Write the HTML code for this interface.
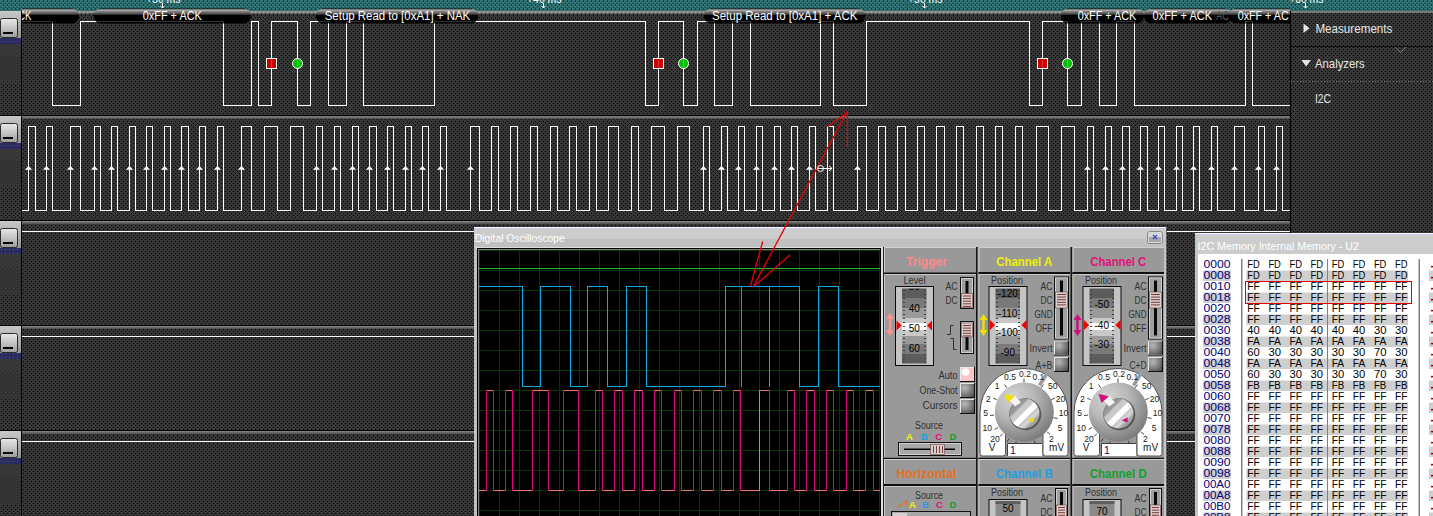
<!DOCTYPE html>
<html><head><meta charset="utf-8"><style>
html,body{margin:0;padding:0;width:1433px;height:516px;overflow:hidden;background:#333;font-family:"Liberation Sans", sans-serif}
</style></head><body>
<svg width="1433" height="516" style="position:absolute;left:0;top:0" font-family='"Liberation Sans", sans-serif'>
<defs>
<pattern id="dots" width="4" height="4" patternUnits="userSpaceOnUse"><rect width="4" height="4" fill="#363636"/><rect x="3" y="1" width="1" height="1" fill="#000"/><rect x="1" y="3" width="1" height="1" fill="#000"/></pattern>
<pattern id="sepp" width="4" height="3" patternUnits="userSpaceOnUse"><rect width="4" height="1" fill="#8e8e8e"/><rect y="1" width="4" height="1" fill="#8a8a8a"/><rect y="2" width="4" height="1" fill="#6a6a6a"/><rect x="1" y="1" width="1" height="1" fill="#a4a4a4"/><rect x="3" y="2" width="1" height="1" fill="#303030"/></pattern><pattern id="teal" width="4" height="4" patternUnits="userSpaceOnUse"><rect width="4" height="4" fill="#2c6c6c"/><rect x="3" y="0" width="1" height="1" fill="#2a2a86"/><rect x="3" y="1" width="1" height="1" fill="#263636"/><rect x="3" y="2" width="1" height="1" fill="#6f6f6f"/><rect x="1" y="3" width="1" height="1" fill="#263636"/><rect x="1" y="0" width="1" height="1" fill="#6f6f6f"/></pattern>
<pattern id="tdots" width="4" height="4" patternUnits="userSpaceOnUse"><rect width="4" height="4" fill="#363636"/><rect x="3" y="1" width="1" height="1" fill="#1f4f4f"/><rect x="1" y="3" width="1" height="1" fill="#1f4f4f"/></pattern><pattern id="ndots" width="4" height="4" patternUnits="userSpaceOnUse"><rect width="4" height="4" fill="#363636"/><rect x="3" y="1" width="1" height="1" fill="#1a1a5a"/><rect x="1" y="3" width="1" height="1" fill="#1a1a5a"/></pattern><pattern id="navy" width="4" height="4" patternUnits="userSpaceOnUse"><rect width="4" height="4" fill="#2b2b62"/><rect x="1" y="1" width="1" height="1" fill="#2f6b6b"/></pattern>
<linearGradient id="pillg" x1="0" y1="0" x2="0" y2="1"><stop offset="0" stop-color="#101010"/><stop offset="0.06" stop-color="#101010"/><stop offset="0.07" stop-color="#b4b4b4"/><stop offset="0.13" stop-color="#b0b0b0"/><stop offset="0.14" stop-color="#909090"/><stop offset="0.33" stop-color="#5c5c5c"/><stop offset="0.34" stop-color="#383838"/><stop offset="0.4" stop-color="#303030"/><stop offset="0.41" stop-color="#000"/><stop offset="1" stop-color="#000"/></linearGradient>
<linearGradient id="lgrad" x1="0" y1="0" x2="0" y2="1"><stop offset="0" stop-color="#c8c8c8"/><stop offset="1" stop-color="#8c8c8c"/></linearGradient>
<linearGradient id="btng" x1="0" y1="0" x2="0" y2="1"><stop offset="0" stop-color="#e8e8e8"/><stop offset="0.5" stop-color="#c4c4c4"/><stop offset="1" stop-color="#9a9a9a"/></linearGradient>
<linearGradient id="sepg" x1="0" y1="0" x2="0" y2="1"><stop offset="0" stop-color="#8a8a8a"/><stop offset="1" stop-color="#4a4a4a"/></linearGradient>
</defs>
<rect width="1433" height="516" fill="url(#dots)"/>
<rect x="0" y="0" width="1433" height="11" fill="url(#teal)"/>
<svg x="22" y="11" width="1268" height="3"><rect x="-22" y="0" width="1300" height="3" fill="url(#sepp)"/></svg>
<rect x="1291" y="11" width="142" height="2" fill="#7a7a7a"/>
<rect x="21" y="11" width="1" height="505" fill="#000"/>
<rect x="1290" y="11" width="1" height="505" fill="#000"/>
<rect x="0" y="11" width="21" height="31" fill="url(#lgrad)"/><rect x="0.5" y="18.5" width="17" height="19" rx="2" fill="url(#btng)" stroke="#2a2a2a"/><rect x="3" y="32" width="10" height="2" fill="#000"/><rect x="0" y="38" width="21" height="6" fill="url(#navy)"/><rect x="0" y="44" width="21" height="12" fill="url(#tdots)"/><rect x="0" y="56" width="21" height="28" fill="url(#ndots)"/><rect x="0" y="116" width="21" height="31" fill="url(#lgrad)"/><rect x="0.5" y="123.5" width="17" height="19" rx="2" fill="url(#btng)" stroke="#2a2a2a"/><rect x="3" y="137" width="10" height="2" fill="#000"/><rect x="0" y="143" width="21" height="6" fill="url(#navy)"/><rect x="0" y="149" width="21" height="12" fill="url(#tdots)"/><rect x="0" y="161" width="21" height="28" fill="url(#ndots)"/><rect x="0" y="221" width="21" height="31" fill="url(#lgrad)"/><rect x="0.5" y="228.5" width="17" height="19" rx="2" fill="url(#btng)" stroke="#2a2a2a"/><rect x="3" y="242" width="10" height="2" fill="#000"/><rect x="0" y="248" width="21" height="6" fill="url(#navy)"/><rect x="0" y="254" width="21" height="12" fill="url(#tdots)"/><rect x="0" y="266" width="21" height="28" fill="url(#ndots)"/><rect x="0" y="326" width="21" height="31" fill="url(#lgrad)"/><rect x="0.5" y="333.5" width="17" height="19" rx="2" fill="url(#btng)" stroke="#2a2a2a"/><rect x="3" y="347" width="10" height="2" fill="#000"/><rect x="0" y="353" width="21" height="6" fill="url(#navy)"/><rect x="0" y="359" width="21" height="12" fill="url(#tdots)"/><rect x="0" y="371" width="21" height="28" fill="url(#ndots)"/><rect x="0" y="431" width="21" height="31" fill="url(#lgrad)"/><rect x="0.5" y="438.5" width="17" height="19" rx="2" fill="url(#btng)" stroke="#2a2a2a"/><rect x="3" y="452" width="10" height="2" fill="#000"/><rect x="0" y="458" width="21" height="6" fill="url(#navy)"/><rect x="0" y="464" width="21" height="12" fill="url(#tdots)"/><rect x="0" y="476" width="21" height="28" fill="url(#ndots)"/><rect x="0" y="115" width="1290" height="1" fill="#000"/><rect x="22" y="116" width="1268" height="3" fill="url(#sepg)"/><rect x="0" y="220" width="1290" height="1" fill="#000"/><rect x="22" y="221" width="1268" height="3" fill="url(#sepg)"/><rect x="0" y="325" width="1290" height="1" fill="#000"/><rect x="22" y="326" width="1268" height="3" fill="url(#sepg)"/><rect x="0" y="430" width="1290" height="1" fill="#000"/><rect x="22" y="431" width="1268" height="3" fill="url(#sepg)"/>
<g fill="#fff" font-size="12">
<text x="146" y="2.8" textLength="34.5" lengthAdjust="spacingAndGlyphs">+30 ms</text><text x="527" y="2.8" textLength="34.5" lengthAdjust="spacingAndGlyphs">+40 ms</text><text x="908" y="2.8" textLength="34.5" lengthAdjust="spacingAndGlyphs">+50 ms</text><text x="1289" y="2.8" textLength="34.5" lengthAdjust="spacingAndGlyphs">+60 ms</text>
</g>
<g stroke="#fff" stroke-width="1" fill="none">
<path d="M162.5,3 V8 M160.5,6 L162.5,8 L164.5,6 M543.5,3 V8 M541.5,6 L543.5,8 L545.5,6 M924.5,3 V8 M922.5,6 L924.5,8 L926.5,6 M1305.5,3 V8 M1303.5,6 L1305.5,8 L1307.5,6"/>
</g>
<g shape-rendering="crispEdges">
<polyline points="22,21.5 52.5,21.5 52.5,105.5 80.5,105.5 80.5,21.5 223.5,21.5 223.5,105.5 251.5,105.5 251.5,21.5 258.5,21.5 258.5,105.5 271.5,105.5 271.5,21.5 297.5,21.5 297.5,105.5 310.5,105.5 310.5,21.5 328.5,21.5 328.5,105.5 346.5,105.5 346.5,21.5 363.5,21.5 363.5,105.5 434.5,105.5 434.5,21.5 645.5,21.5 645.5,105.5 658.5,105.5 658.5,21.5 683.5,21.5 683.5,105.5 697.5,105.5 697.5,21.5 714.5,21.5 714.5,105.5 732.5,105.5 732.5,21.5 750.5,21.5 750.5,105.5 820.5,105.5 820.5,21.5 833.5,21.5 833.5,105.5 866.5,105.5 866.5,21.5 1029.5,21.5 1029.5,105.5 1042.5,105.5 1042.5,21.5 1067.5,21.5 1067.5,105.5 1081.5,105.5 1081.5,21.5 1099.5,21.5 1099.5,105.5 1116.5,105.5 1116.5,21.5 1134.5,21.5 1134.5,105.5 1245.5,105.5 1245.5,21.5 1252.5,21.5 1252.5,105.5 1290,105.5" fill="none" stroke="#fff" stroke-width="1"/>
<polyline points="22,210.5 28.5,210.5 28.5,126.5 35.5,126.5 35.5,210.5 46.5,210.5 46.5,126.5 52.5,126.5 52.5,210.5 70.5,210.5 70.5,126.5 80.5,126.5 80.5,210.5 94.5,210.5 94.5,126.5 100.5,126.5 100.5,210.5 111.5,210.5 111.5,126.5 117.5,126.5 117.5,210.5 129.5,210.5 129.5,126.5 135.5,126.5 135.5,210.5 146.5,210.5 146.5,126.5 152.5,126.5 152.5,210.5 164.5,210.5 164.5,126.5 170.5,126.5 170.5,210.5 181.5,210.5 181.5,126.5 188.5,126.5 188.5,210.5 199.5,210.5 199.5,126.5 205.5,126.5 205.5,210.5 217.5,210.5 217.5,126.5 223.5,126.5 223.5,210.5 241.5,210.5 241.5,126.5 251.5,126.5 251.5,210.5 264.5,210.5 264.5,126.5 277.5,126.5 277.5,210.5 290.5,210.5 290.5,126.5 303.5,126.5 303.5,210.5 316.5,210.5 316.5,126.5 322.5,126.5 322.5,210.5 334.5,210.5 334.5,126.5 340.5,126.5 340.5,210.5 352.5,210.5 352.5,126.5 358.5,126.5 358.5,210.5 369.5,210.5 369.5,126.5 376.5,126.5 376.5,210.5 387.5,210.5 387.5,126.5 393.5,126.5 393.5,210.5 405.5,210.5 405.5,126.5 411.5,126.5 411.5,210.5 422.5,210.5 422.5,126.5 428.5,126.5 428.5,210.5 440.5,210.5 440.5,126.5 446.5,126.5 446.5,210.5 470.5,210.5 470.5,126.5 479.5,126.5 479.5,210.5 491.5,210.5 491.5,126.5 498.5,126.5 498.5,210.5 510.5,210.5 510.5,126.5 517.5,126.5 517.5,210.5 530.5,210.5 530.5,126.5 537.5,126.5 537.5,210.5 550.5,210.5 550.5,126.5 557.5,126.5 557.5,210.5 569.5,210.5 569.5,126.5 576.5,126.5 576.5,210.5 589.5,210.5 589.5,126.5 596.5,126.5 596.5,210.5 608.5,210.5 608.5,126.5 618.5,126.5 618.5,210.5 631.5,210.5 631.5,126.5 638.5,126.5 638.5,210.5 651.5,210.5 651.5,126.5 664.5,126.5 664.5,210.5 677.5,210.5 677.5,126.5 689.5,126.5 689.5,210.5 703.5,210.5 703.5,126.5 709.5,126.5 709.5,210.5 721.5,210.5 721.5,126.5 727.5,126.5 727.5,210.5 738.5,210.5 738.5,126.5 744.5,126.5 744.5,210.5 756.5,210.5 756.5,126.5 762.5,126.5 762.5,210.5 774.5,210.5 774.5,126.5 780.5,126.5 780.5,210.5 791.5,210.5 791.5,126.5 797.5,126.5 797.5,210.5 809.5,210.5 809.5,126.5 815.5,126.5 815.5,210.5 827.5,210.5 827.5,126.5 833.5,126.5 833.5,210.5 857.5,210.5 857.5,126.5 866.5,126.5 866.5,210.5 878.5,210.5 878.5,126.5 885.5,126.5 885.5,210.5 897.5,210.5 897.5,126.5 905.5,126.5 905.5,210.5 917.5,210.5 917.5,126.5 924.5,126.5 924.5,210.5 936.5,210.5 936.5,126.5 944.5,126.5 944.5,210.5 956.5,210.5 956.5,126.5 963.5,126.5 963.5,210.5 976.5,210.5 976.5,126.5 983.5,126.5 983.5,210.5 995.5,210.5 995.5,126.5 1002.5,126.5 1002.5,210.5 1015.5,210.5 1015.5,126.5 1022.5,126.5 1022.5,210.5 1036.5,210.5 1036.5,126.5 1048.5,126.5 1048.5,210.5 1061.5,210.5 1061.5,126.5 1074.5,126.5 1074.5,210.5 1087.5,210.5 1087.5,126.5 1093.5,126.5 1093.5,210.5 1105.5,210.5 1105.5,126.5 1111.5,126.5 1111.5,210.5 1122.5,210.5 1122.5,126.5 1129.5,126.5 1129.5,210.5 1140.5,210.5 1140.5,126.5 1147.5,126.5 1147.5,210.5 1158.5,210.5 1158.5,126.5 1164.5,126.5 1164.5,210.5 1176.5,210.5 1176.5,126.5 1182.5,126.5 1182.5,210.5 1193.5,210.5 1193.5,126.5 1199.5,126.5 1199.5,210.5 1211.5,210.5 1211.5,126.5 1217.5,126.5 1217.5,210.5 1234.5,210.5 1234.5,126.5 1244.5,126.5 1244.5,210.5 1258.5,210.5 1258.5,126.5 1264.5,126.5 1264.5,210.5 1276.5,210.5 1276.5,126.5 1282.5,126.5 1282.5,210.5 1290,210.5" fill="none" stroke="#fff" stroke-width="1"/>
<path d="M22,231.5 H1290 M22,336.5 H1290 M22,441.5 H1290" stroke="#fff" stroke-width="1"/>
</g>
<path d="M24.9,169.8 L32.1,169.8 L28.5,166Z" fill="#fff"/><path d="M42.9,169.8 L50.1,169.8 L46.5,166Z" fill="#fff"/><path d="M66.9,169.8 L74.1,169.8 L70.5,166Z" fill="#fff"/><path d="M90.9,169.8 L98.1,169.8 L94.5,166Z" fill="#fff"/><path d="M107.9,169.8 L115.1,169.8 L111.5,166Z" fill="#fff"/><path d="M125.9,169.8 L133.1,169.8 L129.5,166Z" fill="#fff"/><path d="M142.9,169.8 L150.1,169.8 L146.5,166Z" fill="#fff"/><path d="M160.9,169.8 L168.1,169.8 L164.5,166Z" fill="#fff"/><path d="M177.9,169.8 L185.1,169.8 L181.5,166Z" fill="#fff"/><path d="M195.9,169.8 L203.1,169.8 L199.5,166Z" fill="#fff"/><path d="M213.9,169.8 L221.1,169.8 L217.5,166Z" fill="#fff"/><path d="M237.9,169.8 L245.1,169.8 L241.5,166Z" fill="#fff"/><path d="M312.9,169.8 L320.1,169.8 L316.5,166Z" fill="#fff"/><path d="M330.9,169.8 L338.1,169.8 L334.5,166Z" fill="#fff"/><path d="M348.9,169.8 L356.1,169.8 L352.5,166Z" fill="#fff"/><path d="M365.9,169.8 L373.1,169.8 L369.5,166Z" fill="#fff"/><path d="M383.9,169.8 L391.1,169.8 L387.5,166Z" fill="#fff"/><path d="M401.9,169.8 L409.1,169.8 L405.5,166Z" fill="#fff"/><path d="M418.9,169.8 L426.1,169.8 L422.5,166Z" fill="#fff"/><path d="M436.9,169.8 L444.1,169.8 L440.5,166Z" fill="#fff"/><path d="M466.9,169.8 L474.1,169.8 L470.5,166Z" fill="#fff"/><path d="M699.9,169.8 L707.1,169.8 L703.5,166Z" fill="#fff"/><path d="M717.9,169.8 L725.1,169.8 L721.5,166Z" fill="#fff"/><path d="M734.9,169.8 L742.1,169.8 L738.5,166Z" fill="#fff"/><path d="M752.9,169.8 L760.1,169.8 L756.5,166Z" fill="#fff"/><path d="M770.9,169.8 L778.1,169.8 L774.5,166Z" fill="#fff"/><path d="M787.9,169.8 L795.1,169.8 L791.5,166Z" fill="#fff"/><path d="M805.9,169.8 L813.1,169.8 L809.5,166Z" fill="#fff"/><path d="M853.9,169.8 L861.1,169.8 L857.5,166Z" fill="#fff"/><path d="M1083.9,169.8 L1091.1,169.8 L1087.5,166Z" fill="#fff"/><path d="M1101.9,169.8 L1109.1,169.8 L1105.5,166Z" fill="#fff"/><path d="M1118.9,169.8 L1126.1,169.8 L1122.5,166Z" fill="#fff"/><path d="M1136.9,169.8 L1144.1,169.8 L1140.5,166Z" fill="#fff"/><path d="M1154.9,169.8 L1162.1,169.8 L1158.5,166Z" fill="#fff"/><path d="M1172.9,169.8 L1180.1,169.8 L1176.5,166Z" fill="#fff"/><path d="M1189.9,169.8 L1197.1,169.8 L1193.5,166Z" fill="#fff"/><path d="M1207.9,169.8 L1215.1,169.8 L1211.5,166Z" fill="#fff"/><path d="M1230.9,169.8 L1238.1,169.8 L1234.5,166Z" fill="#fff"/><path d="M1254.9,169.8 L1262.1,169.8 L1258.5,166Z" fill="#fff"/><path d="M1272.9,169.8 L1280.1,169.8 L1276.5,166Z" fill="#fff"/>
<g stroke="#fff" stroke-width="1">
<rect x="266.5" y="58.5" width="10" height="10" fill="#cc0000"/>
<rect x="653.5" y="58.5" width="10" height="10" fill="#cc0000"/>
<rect x="1037.5" y="58.5" width="10" height="10" fill="#cc0000"/>
<circle cx="297.5" cy="63.5" r="5" fill="#00c000"/>
<circle cx="683.5" cy="63.5" r="5" fill="#00c000"/>
<circle cx="1067.5" cy="63.5" r="5" fill="#00c000"/>
</g>
<svg x="22" y="0" width="1268" height="30" overflow="hidden"><g transform="translate(-22,0)"><g><rect x="-60" y="8.5" width="139" height="15" rx="7" ry="7" fill="url(#pillg)"/><text x="11.5" y="20" fill="#fff" font-size="12" text-anchor="start" textLength="20" lengthAdjust="spacingAndGlyphs">ACK</text></g><g><rect x="94" y="8.5" width="157" height="15" rx="7" ry="7" fill="url(#pillg)"/><text x="142.8" y="20" fill="#fff" font-size="12" text-anchor="start" textLength="59" lengthAdjust="spacingAndGlyphs">0xFF + ACK</text></g><g><rect x="316" y="8.5" width="162" height="15" rx="7" ry="7" fill="url(#pillg)"/><text x="324.7" y="20" fill="#fff" font-size="12" text-anchor="start" textLength="145.5" lengthAdjust="spacingAndGlyphs">Setup Read to [0xA1] + NAK</text></g><g><rect x="704" y="8.5" width="161" height="15" rx="7" ry="7" fill="url(#pillg)"/><text x="712" y="20" fill="#fff" font-size="12" text-anchor="start" textLength="145.5" lengthAdjust="spacingAndGlyphs">Setup Read to [0xA1] + ACK</text></g><g><rect x="1061" y="8.5" width="83" height="15" rx="7" ry="7" fill="url(#pillg)"/><text x="1077.7" y="20" fill="#fff" font-size="12" text-anchor="start" textLength="58.6" lengthAdjust="spacingAndGlyphs">0xFF + ACK</text></g><g><rect x="1144" y="8.5" width="88" height="15" rx="7" ry="7" fill="url(#pillg)"/><text x="1152.6" y="20" fill="#fff" font-size="12" text-anchor="start" textLength="59.4" lengthAdjust="spacingAndGlyphs">0xFF + ACK</text></g><g><rect x="1229" y="8.5" width="111" height="15" rx="7" ry="7" fill="url(#pillg)"/><text x="1237.7" y="20" fill="#fff" font-size="12" text-anchor="start" textLength="51" lengthAdjust="spacingAndGlyphs">0xFF + AC</text></g><text x="1216" y="20" fill="#555" font-size="12" textLength="13" lengthAdjust="spacingAndGlyphs">AC</text></g></svg>
<polyline points="22,21.5 52.5,21.5 52.5,105.5 80.5,105.5 80.5,21.5 223.5,21.5 223.5,105.5 251.5,105.5 251.5,21.5 258.5,21.5 258.5,105.5 271.5,105.5 271.5,21.5 297.5,21.5 297.5,105.5 310.5,105.5 310.5,21.5 328.5,21.5 328.5,105.5 346.5,105.5 346.5,21.5 363.5,21.5 363.5,105.5 434.5,105.5 434.5,21.5 645.5,21.5 645.5,105.5 658.5,105.5 658.5,21.5 683.5,21.5 683.5,105.5 697.5,105.5 697.5,21.5 714.5,21.5 714.5,105.5 732.5,105.5 732.5,21.5 750.5,21.5 750.5,105.5 820.5,105.5 820.5,21.5 833.5,21.5 833.5,105.5 866.5,105.5 866.5,21.5 1029.5,21.5 1029.5,105.5 1042.5,105.5 1042.5,21.5 1067.5,21.5 1067.5,105.5 1081.5,105.5 1081.5,21.5 1099.5,21.5 1099.5,105.5 1116.5,105.5 1116.5,21.5 1134.5,21.5 1134.5,105.5 1245.5,105.5 1245.5,21.5 1252.5,21.5 1252.5,105.5 1290,105.5" fill="none" stroke="#fff" stroke-width="1" opacity="0.2" shape-rendering="crispEdges"/>
<g fill="#e6e6e6">
<path d="M1303.5,23.5 L1309.5,28.2 L1303.5,33Z"/>
<text x="1315.4" y="33.4" font-size="13" textLength="77" lengthAdjust="spacingAndGlyphs">Measurements</text>
<rect x="1291" y="46" width="142" height="1" fill="#111"/>
<path d="M1395,47 L1400.5,52.5 L1406,47" stroke="#777" fill="none"/>
<path d="M1301.5,60 L1311,60 L1306.2,66.5Z"/>
<text x="1315" y="68.4" font-size="13" textLength="49.7" lengthAdjust="spacingAndGlyphs">Analyzers</text>
<path d="M1291,81.5 H1433" stroke="#777" stroke-dasharray="1,2"/>
<text x="1315" y="103" font-size="13" textLength="16" lengthAdjust="spacingAndGlyphs">I2C</text>
</g>
</svg>
<svg width="693" height="289" style="position:absolute;left:474px;top:227px" font-family='"Liberation Sans", sans-serif'><defs><linearGradient id="tbar" x1="0" y1="0" x2="0" y2="1"><stop offset="0" stop-color="#d4d4d4"/><stop offset="0.55" stop-color="#cccccc"/><stop offset="0.56" stop-color="#c2c2c2"/><stop offset="1" stop-color="#c2c2c2"/></linearGradient><linearGradient id="drum" x1="0" y1="0" x2="0" y2="1"><stop offset="0" stop-color="#5c5c5c"/><stop offset="0.13" stop-color="#5c5c5c"/><stop offset="0.13" stop-color="#7a7a7a"/><stop offset="0.26" stop-color="#7a7a7a"/><stop offset="0.26" stop-color="#9a9a9a"/><stop offset="0.39" stop-color="#9a9a9a"/><stop offset="0.39" stop-color="#c8c8c8"/><stop offset="0.46" stop-color="#c8c8c8"/><stop offset="0.46" stop-color="#ffffff"/><stop offset="0.56" stop-color="#ffffff"/><stop offset="0.56" stop-color="#c8c8c8"/><stop offset="0.63" stop-color="#c8c8c8"/><stop offset="0.63" stop-color="#9a9a9a"/><stop offset="0.74" stop-color="#9a9a9a"/><stop offset="0.74" stop-color="#7a7a7a"/><stop offset="0.87" stop-color="#7a7a7a"/><stop offset="0.87" stop-color="#5c5c5c"/><stop offset="1" stop-color="#5c5c5c"/></linearGradient><radialGradient id="knob" cx="0.38" cy="0.32" r="0.75" fx="0.3" fy="0.25"><stop offset="0" stop-color="#d4d4d4"/><stop offset="0.45" stop-color="#b8b8b8"/><stop offset="0.7" stop-color="#9a9a9a"/><stop offset="0.88" stop-color="#848484"/><stop offset="1" stop-color="#727272"/></radialGradient><linearGradient id="knobin" x1="0.1" y1="0.1" x2="0.9" y2="0.9"><stop offset="0" stop-color="#8a8a8a"/><stop offset="0.25" stop-color="#9c9c9c"/><stop offset="0.3" stop-color="#c8c8c8"/><stop offset="0.45" stop-color="#cccccc"/><stop offset="0.47" stop-color="#ffffff"/><stop offset="0.62" stop-color="#ffffff"/><stop offset="0.64" stop-color="#c4c4c4"/><stop offset="0.75" stop-color="#d8d8d8"/><stop offset="0.85" stop-color="#a8a8a8"/><stop offset="1" stop-color="#909090"/></linearGradient><radialGradient id="btnrad" cx="0.3" cy="0.3" r="0.9" fx="0.3" fy="0.3"><stop offset="0" stop-color="#b4b4b4"/><stop offset="0.25" stop-color="#a0a0a0"/><stop offset="0.5" stop-color="#848484"/><stop offset="0.75" stop-color="#6a6a6a"/><stop offset="1" stop-color="#4a4a4a"/></radialGradient></defs><rect x="0" y="0" width="693" height="289" fill="#c0c0c0"/><rect x="0" y="0" width="693" height="1" fill="#f4f4f8"/><rect x="0" y="1" width="693" height="1" fill="#ccccf4"/><rect x="0" y="2" width="693" height="10" fill="#cccccc"/><rect x="0" y="12" width="693" height="8" fill="#c0c0c0"/><text x="0.8" y="14.6" font-size="10.5" fill="#fff" textLength="90" lengthAdjust="spacingAndGlyphs">Digital Oscilloscope</text><rect x="673.5" y="4.5" width="15" height="12" rx="2" fill="#d8d8d8" stroke="#888"/><rect x="675" y="10" width="12" height="5" fill="#a8a8a8"/><path d="M679,8 L683,12 M683,8 L679,12" stroke="#4040d0" stroke-width="1.2"/><rect x="0" y="20" width="693" height="1" fill="#dcdcdc"/><rect x="3" y="21" width="404" height="268" fill="#000"/><rect x="4" y="22" width="402" height="1" fill="#808080"/><rect x="4" y="22" width="1" height="289" fill="#808080"/><rect x="407" y="20" width="2" height="289" fill="#e0e0e0"/><rect x="409" y="20" width="1" height="289" fill="#202020"/><path d="M5.5,23 V289 M25.5,23 V289 M45.5,23 V289 M65.5,23 V289 M85.5,23 V289 M105.5,23 V289 M125.5,23 V289 M145.5,23 V289 M165.5,23 V289 M185.5,23 V289 M205.5,23 V289 M225.5,23 V289 M245.5,23 V289 M265.5,23 V289 M285.5,23 V289 M305.5,23 V289 M325.5,23 V289 M345.5,23 V289 M365.5,23 V289 M385.5,23 V289 M405.5,23 V289 M5,23.5 H406 M5,43.5 H406 M5,63.5 H406 M5,83.5 H406 M5,103.5 H406 M5,123.5 H406 M5,143.5 H406 M5,163.5 H406 M5,183.5 H406 M5,203.5 H406 M5,223.5 H406 M5,243.5 H406 M5,263.5 H406 M5,283.5 H406" stroke="#033803" stroke-width="1" shape-rendering="crispEdges"/><path d="M5,41.5 H406" stroke="#22c022" stroke-width="1" shape-rendering="crispEdges"/><polyline points="5,59.5 48.5,59.5 48.5,159.5 66.5,159.5 66.5,59.5 96.5,59.5 96.5,159.5 113.5,159.5 113.5,59.5 133.5,59.5 133.5,159.5 152.5,159.5 152.5,59.5 172.5,59.5 172.5,159.5 251.5,159.5 251.5,59.5 325.5,59.5 325.5,159.5 344.5,159.5 344.5,59.5 364.5,59.5 364.5,159.5 406,159.5" fill="none" stroke="#10a8e0" stroke-width="1" shape-rendering="crispEdges"/><path d="M267.5,59 V160 M295.5,59 V160" stroke="#10a8e0" stroke-width="1" shape-rendering="crispEdges"/><polyline points="5,263.5 12.5,263.5 12.5,163.5 19.5,163.5 19.5,263.5 31.5,263.5 31.5,163.5 38.5,163.5 38.5,263.5 58.5,263.5 58.5,163.5 74.5,163.5 74.5,263.5 89.5,263.5 89.5,163.5 104.5,163.5 104.5,263.5 121.5,263.5 121.5,163.5 128.5,163.5 128.5,263.5 140.5,263.5 140.5,163.5 148.5,163.5 148.5,263.5 160.5,263.5 160.5,163.5 168.5,163.5 168.5,263.5 180.5,263.5 180.5,163.5 187.5,163.5 187.5,263.5 200.5,263.5 200.5,163.5 207.5,163.5 207.5,263.5 219.5,263.5 219.5,163.5 227.5,163.5 227.5,263.5 239.5,263.5 239.5,163.5 247.5,163.5 247.5,263.5 259.5,263.5 259.5,163.5 266.5,163.5 266.5,263.5 285.5,263.5 285.5,163.5 295.5,163.5 295.5,263.5 313.5,263.5 313.5,163.5 320.5,163.5 320.5,263.5 332.5,263.5 332.5,163.5 340.5,163.5 340.5,263.5 352.5,263.5 352.5,163.5 359.5,163.5 359.5,263.5 372.5,263.5 372.5,163.5 379.5,163.5 379.5,263.5 391.5,263.5 391.5,163.5 399.5,163.5 399.5,263.5 406,263.5" fill="none" stroke="#e87474" stroke-width="1" shape-rendering="crispEdges"/><path d="M12.5,163 V264 M19.5,163 V264 M31.5,163 V264 M38.5,163 V264 M58.5,163 V264 M74.5,163 V264 M89.5,163 V264 M104.5,163 V264 M121.5,163 V264 M128.5,163 V264 M140.5,163 V264 M148.5,163 V264 M160.5,163 V264 M168.5,163 V264 M180.5,163 V264 M187.5,163 V264 M200.5,163 V264 M207.5,163 V264 M219.5,163 V264 M227.5,163 V264 M239.5,163 V264 M247.5,163 V264 M259.5,163 V264 M266.5,163 V264 M295.5,163 V264 M313.5,163 V264 M320.5,163 V264 M332.5,163 V264 M340.5,163 V264 M352.5,163 V264 M359.5,163 V264 M372.5,163 V264 M379.5,163 V264 M391.5,163 V264 M399.5,163 V264" stroke="#d8087a" stroke-width="1" shape-rendering="crispEdges"/><rect x="410" y="20" width="281" height="289" fill="#999999"/><rect x="501.5" y="20" width="2" height="289" fill="#141414"/><rect x="596.5" y="20" width="2" height="289" fill="#141414"/><rect x="689" y="20" width="1" height="289" fill="#141414"/><rect x="690" y="20" width="2" height="289" fill="#c4c4c4"/><rect x="692" y="0" width="1" height="289" fill="#606060"/><g transform="translate(-474,-227)"><rect x="884" y="247" width="92" height="26" fill="#999999"/><path d="M884.5,273 V247.5 H976" stroke="#d0d0d0" fill="none"/><path d="M884,273.5 H976" stroke="#101010" stroke-width="2" fill="none"/><text x="926.5" y="265.5" font-size="13" fill="#ff8888" text-anchor="middle" font-weight="bold" textLength="41" lengthAdjust="spacingAndGlyphs">Trigger</text><rect x="884" y="274" width="92" height="184" fill="#999999"/><path d="M884.5,458 V274.5 H976" stroke="#c8c8c8" fill="none"/><path d="M884,458.5 H976" stroke="#101010" stroke-width="1.5"/><text x="914.5" y="284" font-size="10" fill="#303030" text-anchor="middle" font-weight="normal" textLength="22" lengthAdjust="spacingAndGlyphs">Level</text><rect x="895.5" y="286.5" width="38" height="79" fill="#c4c4c4" stroke="#0c0c0c"/><rect x="902" y="288.5" width="24.5" height="75" fill="url(#drum)"/><path d="M902.5,290.5 h2 M924.0,290.5 h2 M902.5,294.5 h2 M924.0,294.5 h2 M902.5,298.5 h2 M924.0,298.5 h2 M902.5,302.5 h2 M924.0,302.5 h2 M902.5,306.5 h2 M924.0,306.5 h2 M902.5,310.5 h2 M924.0,310.5 h2 M902.5,314.5 h2 M924.0,314.5 h2 M902.5,318.5 h2 M924.0,318.5 h2 M902.5,322.5 h2 M924.0,322.5 h2 M902.5,326.5 h2 M924.0,326.5 h2 M902.5,330.5 h2 M924.0,330.5 h2 M902.5,334.5 h2 M924.0,334.5 h2 M902.5,338.5 h2 M924.0,338.5 h2 M902.5,342.5 h2 M924.0,342.5 h2 M902.5,346.5 h2 M924.0,346.5 h2 M902.5,350.5 h2 M924.0,350.5 h2 M902.5,354.5 h2 M924.0,354.5 h2 M902.5,358.5 h2 M924.0,358.5 h2 M902.5,362.5 h2 M924.0,362.5 h2" stroke="#404040" stroke-width="1" shape-rendering="crispEdges"/><clipPath id="dc895286"><rect x="902" y="288.5" width="24.5" height="75"/></clipPath><g clip-path="url(#dc895286)"><text x="914.25" y="290" font-size="10" fill="#000" text-anchor="middle" font-weight="normal">30</text><text x="914.25" y="312" font-size="10" fill="#000" text-anchor="middle" font-weight="normal">40</text><text x="914.25" y="331.5" font-size="10" fill="#000" text-anchor="middle" font-weight="normal">50</text><text x="914.25" y="351.5" font-size="10" fill="#000" text-anchor="middle" font-weight="normal">60</text></g><path d="M896.5,320.5 L901.5,325.5 L896.5,330.5Z" fill="#f00000"/><path d="M932,320.5 L927,325.5 L932,330.5Z" fill="#f00000"/><path d="M890,313 L894,319 L891.2,319 L891.2,330 L894,330 L890,336 L886,330 L888.8,330 L888.8,319 L886,319Z" fill="#ff9090"/><text x="957.5" y="290" font-size="10" fill="#303030" text-anchor="end" font-weight="normal" textLength="12" lengthAdjust="spacingAndGlyphs">AC</text><text x="957.5" y="304" font-size="10" fill="#303030" text-anchor="end" font-weight="normal" textLength="12" lengthAdjust="spacingAndGlyphs">DC</text><rect x="960.5" y="277.5" width="13" height="31" fill="#b0b0b0" stroke="#101010"/><rect x="961.5" y="278.5" width="11" height="29" fill="#a0a0a0" stroke="#d0d0d0"/><rect x="965.5" y="281" width="3" height="24" fill="#080808"/><rect x="961.5" y="293.5" width="11" height="14" fill="#d8d0d0" stroke="#704040" stroke-width="0.6"/><path d="M963,296.0 h8 M963,298.6 h8 M963,301.2 h8 M963,303.8 h8 M963,306.4 h8" stroke="#803838" stroke-width="1"/><path d="M947,334.5 h3.5 V325.5 h3" stroke="#303030" fill="none"/><path d="M950.5,338.5 h3 V349.5 h3" stroke="#303030" fill="none"/><rect x="960.5" y="321.5" width="13" height="32" fill="#b0b0b0" stroke="#101010"/><rect x="961.5" y="322.5" width="11" height="30" fill="#a0a0a0" stroke="#d0d0d0"/><rect x="965.5" y="325" width="3" height="25" fill="#080808"/><rect x="961.5" y="323" width="11" height="14" fill="#d8d0d0" stroke="#704040" stroke-width="0.6"/><path d="M963,325.5 h8 M963,328.1 h8 M963,330.7 h8 M963,333.3 h8 M963,335.9 h8" stroke="#803838" stroke-width="1"/><text x="957.5" y="378.5" font-size="10" fill="#303030" text-anchor="end" font-weight="normal" textLength="19" lengthAdjust="spacingAndGlyphs">Auto</text><text x="957.5" y="393.5" font-size="10" fill="#303030" text-anchor="end" font-weight="normal" textLength="38" lengthAdjust="spacingAndGlyphs">One-Shot</text><text x="957.5" y="408.5" font-size="10" fill="#303030" text-anchor="end" font-weight="normal" textLength="35" lengthAdjust="spacingAndGlyphs">Cursors</text><rect x="960" y="367" width="15" height="15" fill="#101010"/><rect x="960" y="367" width="14" height="14" fill="#e8e8e8"/><rect x="961" y="368" width="13" height="13" fill="#ffc4c4"/><circle cx="965.5" cy="372" r="3.8" fill="#ffffff"/><rect x="960" y="383" width="15" height="15" fill="#101010"/><rect x="960" y="383" width="14" height="14" fill="#e8e8e8"/><rect x="961" y="384" width="13" height="13" fill="url(#btnrad)"/><rect x="960" y="399" width="15" height="15" fill="#101010"/><rect x="960" y="399" width="14" height="14" fill="#e8e8e8"/><rect x="961" y="400" width="13" height="13" fill="url(#btnrad)"/><text x="929" y="429" font-size="10" fill="#303030" text-anchor="middle" font-weight="normal" textLength="28" lengthAdjust="spacingAndGlyphs">Source</text><text x="909.5" y="440" font-size="9.5" fill="#f0f000" text-anchor="middle" font-weight="bold">A</text><text x="924.5" y="440" font-size="9.5" fill="#20a0e0" text-anchor="middle" font-weight="bold">B</text><text x="938.7" y="440" font-size="9.5" fill="#e0107a" text-anchor="middle" font-weight="bold">C</text><text x="953" y="440" font-size="9.5" fill="#10a030" text-anchor="middle" font-weight="bold">D</text><rect x="898.5" y="442.5" width="63" height="13" fill="#a8a8a8" stroke="#101010"/><rect x="899.5" y="443.5" width="61" height="11" fill="none" stroke="#d0d0d0"/><rect x="904" y="448.5" width="51" height="1.5" fill="#000"/><rect x="930.5" y="444.5" width="14" height="10" fill="#d8d0d0" stroke="#704040" stroke-width="0.6"/><path d="M933.5,446 v7 M936.5,446 v7 M939.5,446 v7 M942.5,446 v7" stroke="#803838"/><rect x="884" y="459" width="92" height="25.5" fill="#999999"/><path d="M884.5,484.5 V459.5 H976" stroke="#d0d0d0" fill="none"/><path d="M884,485.0 H976" stroke="#101010" stroke-width="2" fill="none"/><text x="926.5" y="477.5" font-size="13" fill="#e87020" text-anchor="middle" font-weight="bold" textLength="60" lengthAdjust="spacingAndGlyphs">Horizontal</text><rect x="884" y="486" width="92" height="30" fill="#999999"/><path d="M884.5,516 V486.5 H976" stroke="#c8c8c8" fill="none"/><text x="929" y="499" font-size="10" fill="#303030" text-anchor="middle" font-weight="normal" textLength="28" lengthAdjust="spacingAndGlyphs">Source</text><path d="M898,507 L907,501 V507" stroke="#e87020" fill="none" stroke-width="1.2"/><text x="912.5" y="508" font-size="9.5" fill="#f0f000" text-anchor="middle" font-weight="bold">A</text><text x="925.5" y="508" font-size="9.5" fill="#20a0e0" text-anchor="middle" font-weight="bold">B</text><text x="939.5" y="508" font-size="9.5" fill="#e0107a" text-anchor="middle" font-weight="bold">C</text><text x="953" y="508" font-size="9.5" fill="#10a030" text-anchor="middle" font-weight="bold">D</text><rect x="891.5" y="511.5" width="79" height="10" fill="#a8a8a8" stroke="#101010"/><rect x="893" y="513" width="14" height="6" fill="#d8d0d0"/><rect x="978.5" y="247" width="91.5" height="25.5" fill="#999999"/><path d="M979.0,272.5 V247.5 H1070" stroke="#d0d0d0" fill="none"/><path d="M978.5,273.0 H1070" stroke="#101010" stroke-width="2" fill="none"/><text x="1024.25" y="265.5" font-size="13" fill="#f0f000" text-anchor="middle" font-weight="bold" textLength="56" lengthAdjust="spacingAndGlyphs">Channel A</text><rect x="978.5" y="274" width="91.5" height="184" fill="#999999"/><path d="M979.0,458 V274.5 H1070" stroke="#c8c8c8" fill="none"/><path d="M978.5,458.5 H1070" stroke="#101010" stroke-width="1.5"/><text x="1007" y="284" font-size="10" fill="#303030" text-anchor="middle" font-weight="normal" textLength="32" lengthAdjust="spacingAndGlyphs">Position</text><rect x="989.0" y="286.5" width="38" height="79" fill="#c4c4c4" stroke="#0c0c0c"/><rect x="995.5" y="288.5" width="24.5" height="75" fill="url(#drum)"/><path d="M996.0,290.5 h2 M1017.5,290.5 h2 M996.0,294.5 h2 M1017.5,294.5 h2 M996.0,298.5 h2 M1017.5,298.5 h2 M996.0,302.5 h2 M1017.5,302.5 h2 M996.0,306.5 h2 M1017.5,306.5 h2 M996.0,310.5 h2 M1017.5,310.5 h2 M996.0,314.5 h2 M1017.5,314.5 h2 M996.0,318.5 h2 M1017.5,318.5 h2 M996.0,322.5 h2 M1017.5,322.5 h2 M996.0,326.5 h2 M1017.5,326.5 h2 M996.0,330.5 h2 M1017.5,330.5 h2 M996.0,334.5 h2 M1017.5,334.5 h2 M996.0,338.5 h2 M1017.5,338.5 h2 M996.0,342.5 h2 M1017.5,342.5 h2 M996.0,346.5 h2 M1017.5,346.5 h2 M996.0,350.5 h2 M1017.5,350.5 h2 M996.0,354.5 h2 M1017.5,354.5 h2 M996.0,358.5 h2 M1017.5,358.5 h2 M996.0,362.5 h2 M1017.5,362.5 h2" stroke="#404040" stroke-width="1" shape-rendering="crispEdges"/><clipPath id="dc988286"><rect x="995.5" y="288.5" width="24.5" height="75"/></clipPath><g clip-path="url(#dc988286)"><text x="1007.75" y="297" font-size="10" fill="#000" text-anchor="middle" font-weight="normal">-120</text><text x="1007.75" y="316.5" font-size="10" fill="#000" text-anchor="middle" font-weight="normal">-110</text><text x="1007.75" y="336" font-size="10" fill="#000" text-anchor="middle" font-weight="normal">-100</text><text x="1007.75" y="355.5" font-size="10" fill="#000" text-anchor="middle" font-weight="normal">-90</text></g><path d="M990,320 L995,325 L990,330Z" fill="#f00000"/><path d="M1026.5,320 L1021.5,325 L1026.5,330Z" fill="#f00000"/><path d="M983.5,314 L987.5,320 L984.7,320 L984.7,330 L987.5,330 L983.5,336 L979.5,330 L982.3,330 L982.3,320 L979.5,320Z" fill="#f0e000"/><text x="1052.5" y="290" font-size="10" fill="#303030" text-anchor="end" font-weight="normal" textLength="12" lengthAdjust="spacingAndGlyphs">AC</text><text x="1052.5" y="304" font-size="10" fill="#303030" text-anchor="end" font-weight="normal" textLength="12" lengthAdjust="spacingAndGlyphs">DC</text><text x="1052.5" y="318" font-size="10" fill="#303030" text-anchor="end" font-weight="normal" textLength="18" lengthAdjust="spacingAndGlyphs">GND</text><text x="1052.5" y="332" font-size="10" fill="#303030" text-anchor="end" font-weight="normal" textLength="17" lengthAdjust="spacingAndGlyphs">OFF</text><rect x="1054.5" y="277.0" width="14" height="62" fill="#b0b0b0" stroke="#101010"/><rect x="1055.5" y="278.0" width="12" height="60" fill="#a0a0a0" stroke="#d0d0d0"/><rect x="1060.0" y="280.5" width="3" height="55" fill="#080808"/><rect x="1055.5" y="292" width="12" height="16" fill="#d8d0d0" stroke="#704040" stroke-width="0.6"/><path d="M1057,294.5 h9 M1057,297.1 h9 M1057,299.7 h9 M1057,302.3 h9 M1057,304.9 h9" stroke="#803838" stroke-width="1"/><text x="1052.5" y="351.5" font-size="10" fill="#303030" text-anchor="end" font-weight="normal" textLength="23" lengthAdjust="spacingAndGlyphs">Invert</text><text x="1052.5" y="368.5" font-size="10" fill="#303030" text-anchor="end" font-weight="normal" textLength="17" lengthAdjust="spacingAndGlyphs">A+B</text><rect x="1054" y="340.5" width="15" height="15" fill="#101010"/><rect x="1054" y="340.5" width="14" height="14" fill="#e8e8e8"/><rect x="1055" y="341.5" width="13" height="13" fill="url(#btnrad)"/><rect x="1054" y="357" width="15" height="15" fill="#101010"/><rect x="1054" y="357" width="14" height="14" fill="#e8e8e8"/><rect x="1055" y="358" width="13" height="13" fill="url(#btnrad)"/><path d="M982.5,456 Q980,456 980,453.5 V412.5 A44,44 0 0 1 1068,412.5 V453.5 Q1068,456 1065.5,456 H1045.5 Q1043,456 1043,453.5 V424.5 H1005.5 V453.5 Q1005.5,456 1003,456 Z" fill="#ffffff" stroke="#505050" stroke-width="1"/><path d="M1038,384.5 L1048,368.5 L1051,370.5 L1041,386.5Z" fill="#9c9c9c"/><text x="1010" y="380.0" font-size="8.5" fill="#202020" text-anchor="middle" font-weight="normal">0.5</text><text x="1025" y="376.5" font-size="8.5" fill="#202020" text-anchor="middle" font-weight="normal">0.2</text><text x="1038.4" y="380.0" font-size="8.5" fill="#202020" text-anchor="middle" font-weight="normal">0.1</text><text x="997" y="388.5" font-size="8.5" fill="#202020" text-anchor="middle" font-weight="normal">1</text><text x="988.4" y="401.5" font-size="8.5" fill="#202020" text-anchor="middle" font-weight="normal">2</text><text x="985.5" y="415.8" font-size="8.5" fill="#202020" text-anchor="middle" font-weight="normal">5</text><text x="987.2" y="430.5" font-size="8.5" fill="#202020" text-anchor="middle" font-weight="normal">10</text><text x="995" y="442.0" font-size="8.5" fill="#202020" text-anchor="middle" font-weight="normal">20</text><text x="1052.8" y="388.5" font-size="8.5" fill="#202020" text-anchor="middle" font-weight="normal">50</text><text x="1060.5" y="401.5" font-size="8.5" fill="#202020" text-anchor="middle" font-weight="normal">20</text><text x="1063.5" y="415.5" font-size="8.5" fill="#202020" text-anchor="middle" font-weight="normal">10</text><text x="1060" y="430.5" font-size="8.5" fill="#202020" text-anchor="middle" font-weight="normal">5</text><text x="1051.4" y="442.0" font-size="8.5" fill="#202020" text-anchor="middle" font-weight="normal">2</text><text x="992" y="451.3" font-size="10" fill="#202020" text-anchor="middle" font-weight="normal">V</text><text x="1056.6" y="451.3" font-size="10" fill="#202020" text-anchor="middle" font-weight="normal">mV</text><circle cx="1024.3" cy="412.0" r="29.5" fill="url(#knob)"/><path d="M1009.0,438.5 L1007.0,441.9 M998.0,427.5 L994.6,429.5 M994.1,415.1 L990.1,415.5 M996.8,399.8 L993.2,398.1 M1006.8,387.9 L1004.5,384.6 M1024.0,382.5 L1024.0,378.5 M1041.2,387.9 L1043.5,384.6 M1051.2,399.8 L1054.8,398.1 M1053.5,417.7 L1057.5,418.4 M1047.0,431.8 L1050.0,434.4 M1034.3,440.7 L1035.6,444.4 M1016.2,441.5 L1015.2,445.3 M1002.8,433.7 L1000.0,436.5" stroke="#303030" stroke-width="0.9"/><circle cx="1025.3" cy="414.3" r="16" fill="#585858"/><circle cx="1024.5" cy="413.5" r="15" fill="url(#knobin)"/><path d="M1009,399.5 L1015,395.5 L1021,402.5 L1015,406.5Z" fill="#f4f4f4"/><path d="M1004.5,394.0 L1015,396.2 L1007.5,403.0Z" fill="#f0e000"/><path d="M1027.7,420.5 L1033.7,417.3 L1033.7,422.5Z" fill="#f0e000"/><rect x="1007" y="443" width="35" height="13" fill="#fff"/><path d="M1007.5,456 V443.5 H1042" stroke="#404040" fill="none"/><text x="1010" y="454" font-size="10.5" fill="#300080" text-anchor="start" font-weight="normal">1</text><rect x="1072.5" y="247" width="91.5" height="25.5" fill="#999999"/><path d="M1073.0,272.5 V247.5 H1164" stroke="#d0d0d0" fill="none"/><path d="M1072.5,273.0 H1164" stroke="#101010" stroke-width="2" fill="none"/><text x="1118.25" y="265.5" font-size="13" fill="#e0107a" text-anchor="middle" font-weight="bold" textLength="56" lengthAdjust="spacingAndGlyphs">Channel C</text><rect x="1072.5" y="274" width="91.5" height="184" fill="#999999"/><path d="M1073.0,458 V274.5 H1164" stroke="#c8c8c8" fill="none"/><path d="M1072.5,458.5 H1164" stroke="#101010" stroke-width="1.5"/><text x="1101" y="284" font-size="10" fill="#303030" text-anchor="middle" font-weight="normal" textLength="32" lengthAdjust="spacingAndGlyphs">Position</text><rect x="1083.0" y="286.5" width="38" height="79" fill="#c4c4c4" stroke="#0c0c0c"/><rect x="1089.5" y="288.5" width="24.5" height="75" fill="url(#drum)"/><path d="M1090.0,290.5 h2 M1111.5,290.5 h2 M1090.0,294.5 h2 M1111.5,294.5 h2 M1090.0,298.5 h2 M1111.5,298.5 h2 M1090.0,302.5 h2 M1111.5,302.5 h2 M1090.0,306.5 h2 M1111.5,306.5 h2 M1090.0,310.5 h2 M1111.5,310.5 h2 M1090.0,314.5 h2 M1111.5,314.5 h2 M1090.0,318.5 h2 M1111.5,318.5 h2 M1090.0,322.5 h2 M1111.5,322.5 h2 M1090.0,326.5 h2 M1111.5,326.5 h2 M1090.0,330.5 h2 M1111.5,330.5 h2 M1090.0,334.5 h2 M1111.5,334.5 h2 M1090.0,338.5 h2 M1111.5,338.5 h2 M1090.0,342.5 h2 M1111.5,342.5 h2 M1090.0,346.5 h2 M1111.5,346.5 h2 M1090.0,350.5 h2 M1111.5,350.5 h2 M1090.0,354.5 h2 M1111.5,354.5 h2 M1090.0,358.5 h2 M1111.5,358.5 h2 M1090.0,362.5 h2 M1111.5,362.5 h2" stroke="#404040" stroke-width="1" shape-rendering="crispEdges"/><clipPath id="dc1082286"><rect x="1089.5" y="288.5" width="24.5" height="75"/></clipPath><g clip-path="url(#dc1082286)"><text x="1101.75" y="308" font-size="10" fill="#000" text-anchor="middle" font-weight="normal">-50</text><text x="1101.75" y="328.5" font-size="10" fill="#000" text-anchor="middle" font-weight="normal">-40</text><text x="1101.75" y="348" font-size="10" fill="#000" text-anchor="middle" font-weight="normal">-30</text></g><path d="M1084,320 L1089,325 L1084,330Z" fill="#f00000"/><path d="M1120.5,320 L1115.5,325 L1120.5,330Z" fill="#f00000"/><path d="M1077.5,314 L1081.5,320 L1078.7,320 L1078.7,330 L1081.5,330 L1077.5,336 L1073.5,330 L1076.3,330 L1076.3,320 L1073.5,320Z" fill="#d0107a"/><text x="1146.5" y="290" font-size="10" fill="#303030" text-anchor="end" font-weight="normal" textLength="12" lengthAdjust="spacingAndGlyphs">AC</text><text x="1146.5" y="304" font-size="10" fill="#303030" text-anchor="end" font-weight="normal" textLength="12" lengthAdjust="spacingAndGlyphs">DC</text><text x="1146.5" y="318" font-size="10" fill="#303030" text-anchor="end" font-weight="normal" textLength="18" lengthAdjust="spacingAndGlyphs">GND</text><text x="1146.5" y="332" font-size="10" fill="#303030" text-anchor="end" font-weight="normal" textLength="17" lengthAdjust="spacingAndGlyphs">OFF</text><rect x="1148.5" y="277.0" width="14" height="62" fill="#b0b0b0" stroke="#101010"/><rect x="1149.5" y="278.0" width="12" height="60" fill="#a0a0a0" stroke="#d0d0d0"/><rect x="1154.0" y="280.5" width="3" height="55" fill="#080808"/><rect x="1149.5" y="292" width="12" height="16" fill="#d8d0d0" stroke="#704040" stroke-width="0.6"/><path d="M1151,294.5 h9 M1151,297.1 h9 M1151,299.7 h9 M1151,302.3 h9 M1151,304.9 h9" stroke="#803838" stroke-width="1"/><text x="1146.5" y="351.5" font-size="10" fill="#303030" text-anchor="end" font-weight="normal" textLength="23" lengthAdjust="spacingAndGlyphs">Invert</text><text x="1146.5" y="368.5" font-size="10" fill="#303030" text-anchor="end" font-weight="normal" textLength="17" lengthAdjust="spacingAndGlyphs">C+D</text><rect x="1148" y="340.5" width="15" height="15" fill="#101010"/><rect x="1148" y="340.5" width="14" height="14" fill="#e8e8e8"/><rect x="1149" y="341.5" width="13" height="13" fill="url(#btnrad)"/><rect x="1148" y="357" width="15" height="15" fill="#101010"/><rect x="1148" y="357" width="14" height="14" fill="#e8e8e8"/><rect x="1149" y="358" width="13" height="13" fill="url(#btnrad)"/><path d="M1076.5,456 Q1074,456 1074,453.5 V412.5 A44,44 0 0 1 1162,412.5 V453.5 Q1162,456 1159.5,456 H1139.5 Q1137,456 1137,453.5 V424.5 H1099.5 V453.5 Q1099.5,456 1097,456 Z" fill="#ffffff" stroke="#505050" stroke-width="1"/><path d="M1132,384.5 L1142,368.5 L1145,370.5 L1135,386.5Z" fill="#9c9c9c"/><text x="1104" y="380.0" font-size="8.5" fill="#202020" text-anchor="middle" font-weight="normal">0.5</text><text x="1119" y="376.5" font-size="8.5" fill="#202020" text-anchor="middle" font-weight="normal">0.2</text><text x="1132.4" y="380.0" font-size="8.5" fill="#202020" text-anchor="middle" font-weight="normal">0.1</text><text x="1091" y="388.5" font-size="8.5" fill="#202020" text-anchor="middle" font-weight="normal">1</text><text x="1082.4" y="401.5" font-size="8.5" fill="#202020" text-anchor="middle" font-weight="normal">2</text><text x="1079.5" y="415.8" font-size="8.5" fill="#202020" text-anchor="middle" font-weight="normal">5</text><text x="1081.2" y="430.5" font-size="8.5" fill="#202020" text-anchor="middle" font-weight="normal">10</text><text x="1089" y="442.0" font-size="8.5" fill="#202020" text-anchor="middle" font-weight="normal">20</text><text x="1146.8" y="388.5" font-size="8.5" fill="#202020" text-anchor="middle" font-weight="normal">50</text><text x="1154.5" y="401.5" font-size="8.5" fill="#202020" text-anchor="middle" font-weight="normal">20</text><text x="1157.5" y="415.5" font-size="8.5" fill="#202020" text-anchor="middle" font-weight="normal">10</text><text x="1154" y="430.5" font-size="8.5" fill="#202020" text-anchor="middle" font-weight="normal">5</text><text x="1145.4" y="442.0" font-size="8.5" fill="#202020" text-anchor="middle" font-weight="normal">2</text><text x="1086" y="451.3" font-size="10" fill="#202020" text-anchor="middle" font-weight="normal">V</text><text x="1150.6" y="451.3" font-size="10" fill="#202020" text-anchor="middle" font-weight="normal">mV</text><circle cx="1118.3" cy="412.0" r="29.5" fill="url(#knob)"/><path d="M1103.0,438.5 L1101.0,441.9 M1092.0,427.5 L1088.6,429.5 M1088.1,415.1 L1084.1,415.5 M1090.8,399.8 L1087.2,398.1 M1100.8,387.9 L1098.5,384.6 M1118.0,382.5 L1118.0,378.5 M1135.2,387.9 L1137.5,384.6 M1145.2,399.8 L1148.8,398.1 M1147.5,417.7 L1151.5,418.4 M1141.0,431.8 L1144.0,434.4 M1128.3,440.7 L1129.6,444.4 M1110.2,441.5 L1109.2,445.3 M1096.8,433.7 L1094.0,436.5" stroke="#303030" stroke-width="0.9"/><circle cx="1119.3" cy="414.3" r="16" fill="#585858"/><circle cx="1118.5" cy="413.5" r="15" fill="url(#knobin)"/><path d="M1103,399.5 L1109,395.5 L1115,402.5 L1109,406.5Z" fill="#f4f4f4"/><path d="M1098.5,394.0 L1109,396.2 L1101.5,403.0Z" fill="#d0107a"/><path d="M1121.7,420.5 L1127.7,417.3 L1127.7,422.5Z" fill="#d0107a"/><rect x="1101" y="443" width="35" height="13" fill="#fff"/><path d="M1101.5,456 V443.5 H1136" stroke="#404040" fill="none"/><text x="1104" y="454" font-size="10.5" fill="#300080" text-anchor="start" font-weight="normal">1</text><rect x="978.5" y="459" width="91.5" height="25.5" fill="#999999"/><path d="M979.0,484.5 V459.5 H1070" stroke="#d0d0d0" fill="none"/><path d="M978.5,485.0 H1070" stroke="#101010" stroke-width="2" fill="none"/><text x="1024.25" y="477.5" font-size="13" fill="#20a0e0" text-anchor="middle" font-weight="bold" textLength="57" lengthAdjust="spacingAndGlyphs">Channel B</text><rect x="978.5" y="486" width="91.5" height="30" fill="#999999"/><path d="M979.0,516 V486.5 H1070" stroke="#c8c8c8" fill="none"/><text x="1007" y="495.5" font-size="10" fill="#303030" text-anchor="middle" font-weight="normal" textLength="32" lengthAdjust="spacingAndGlyphs">Position</text><rect x="989.0" y="499.5" width="38" height="20" fill="#c4c4c4" stroke="#0c0c0c"/><rect x="995.5" y="501" width="25" height="18" fill="#8a8a8a"/><rect x="995.5" y="501" width="25" height="3" fill="#606060"/><text x="1008" y="511.5" font-size="10" fill="#000" text-anchor="middle" font-weight="normal">50</text><text x="1052.5" y="502" font-size="10" fill="#303030" text-anchor="end" font-weight="normal" textLength="12" lengthAdjust="spacingAndGlyphs">AC</text><text x="1052.5" y="515.5" font-size="10" fill="#303030" text-anchor="end" font-weight="normal" textLength="12" lengthAdjust="spacingAndGlyphs">DC</text><rect x="1055.5" y="488.5" width="12" height="39" fill="#b0b0b0" stroke="#101010"/><rect x="1056.5" y="489.5" width="10" height="37" fill="#a0a0a0" stroke="#d0d0d0"/><rect x="1060.0" y="492" width="3" height="32" fill="#080808"/><rect x="1056.5" y="505" width="10" height="14" fill="#d8d0d0" stroke="#704040" stroke-width="0.6"/><path d="M1058,507.5 h7 M1058,510.1 h7 M1058,512.7 h7 M1058,515.3 h7 M1058,517.9 h7" stroke="#803838" stroke-width="1"/><rect x="1072.5" y="459" width="91.5" height="25.5" fill="#999999"/><path d="M1073.0,484.5 V459.5 H1164" stroke="#d0d0d0" fill="none"/><path d="M1072.5,485.0 H1164" stroke="#101010" stroke-width="2" fill="none"/><text x="1118.25" y="477.5" font-size="13" fill="#10a030" text-anchor="middle" font-weight="bold" textLength="57" lengthAdjust="spacingAndGlyphs">Channel D</text><rect x="1072.5" y="486" width="91.5" height="30" fill="#999999"/><path d="M1073.0,516 V486.5 H1164" stroke="#c8c8c8" fill="none"/><text x="1101" y="495.5" font-size="10" fill="#303030" text-anchor="middle" font-weight="normal" textLength="32" lengthAdjust="spacingAndGlyphs">Position</text><rect x="1083.0" y="499.5" width="38" height="20" fill="#c4c4c4" stroke="#0c0c0c"/><rect x="1089.5" y="501" width="25" height="18" fill="#8a8a8a"/><rect x="1089.5" y="501" width="25" height="3" fill="#606060"/><text x="1102" y="515" font-size="10" fill="#000" text-anchor="middle" font-weight="normal">70</text><text x="1146.5" y="502" font-size="10" fill="#303030" text-anchor="end" font-weight="normal" textLength="12" lengthAdjust="spacingAndGlyphs">AC</text><text x="1146.5" y="515.5" font-size="10" fill="#303030" text-anchor="end" font-weight="normal" textLength="12" lengthAdjust="spacingAndGlyphs">DC</text><rect x="1149.5" y="488.5" width="12" height="39" fill="#b0b0b0" stroke="#101010"/><rect x="1150.5" y="489.5" width="10" height="37" fill="#a0a0a0" stroke="#d0d0d0"/><rect x="1154.0" y="492" width="3" height="32" fill="#080808"/><rect x="1150.5" y="505" width="10" height="14" fill="#d8d0d0" stroke="#704040" stroke-width="0.6"/><path d="M1152,507.5 h7 M1152,510.1 h7 M1152,512.7 h7 M1152,515.3 h7 M1152,517.9 h7" stroke="#803838" stroke-width="1"/></g></svg>
<svg width="238" height="283" style="position:absolute;left:1195px;top:233px"><defs><linearGradient id="mtbar" x1="0" y1="0" x2="0" y2="1"><stop offset="0" stop-color="#cccccc"/><stop offset="1" stop-color="#cccccc"/></linearGradient></defs><g transform="translate(-1195,-233)"><rect x="1195" y="233" width="238" height="283" fill="#c4c4c4"/><rect x="1195" y="233" width="238" height="1" fill="#f4f4f8"/><rect x="1195" y="234" width="238" height="1" fill="#ccccf4"/><rect x="1197" y="235" width="236" height="19" fill="url(#mtbar)"/><text x="1197.5" y="249.5" font-family='"Liberation Sans", sans-serif' font-size="11" fill="#fff" textLength="161.5" lengthAdjust="spacingAndGlyphs">I2C Memory Internal Memory - U2</text><rect x="1198" y="254" width="235" height="262" fill="#fff"/><rect x="1203" y="270.5" width="28" height="10.5" fill="#cfcfcf"/><rect x="1246.5" y="270.5" width="161.5" height="10.5" fill="#cfcfcf"/><rect x="1429" y="270.5" width="4" height="10.5" fill="#cfcfcf"/><rect x="1203" y="292.5" width="28" height="10.5" fill="#cfcfcf"/><rect x="1246.5" y="292.5" width="161.5" height="10.5" fill="#cfcfcf"/><rect x="1429" y="292.5" width="4" height="10.5" fill="#cfcfcf"/><rect x="1203" y="314.5" width="28" height="10.5" fill="#cfcfcf"/><rect x="1246.5" y="314.5" width="161.5" height="10.5" fill="#cfcfcf"/><rect x="1429" y="314.5" width="4" height="10.5" fill="#cfcfcf"/><rect x="1203" y="336.5" width="28" height="10.5" fill="#cfcfcf"/><rect x="1246.5" y="336.5" width="161.5" height="10.5" fill="#cfcfcf"/><rect x="1429" y="336.5" width="4" height="10.5" fill="#cfcfcf"/><rect x="1203" y="358.5" width="28" height="10.5" fill="#cfcfcf"/><rect x="1246.5" y="358.5" width="161.5" height="10.5" fill="#cfcfcf"/><rect x="1429" y="358.5" width="4" height="10.5" fill="#cfcfcf"/><rect x="1203" y="380.5" width="28" height="10.5" fill="#cfcfcf"/><rect x="1246.5" y="380.5" width="161.5" height="10.5" fill="#cfcfcf"/><rect x="1429" y="380.5" width="4" height="10.5" fill="#cfcfcf"/><rect x="1203" y="402.5" width="28" height="10.5" fill="#cfcfcf"/><rect x="1246.5" y="402.5" width="161.5" height="10.5" fill="#cfcfcf"/><rect x="1429" y="402.5" width="4" height="10.5" fill="#cfcfcf"/><rect x="1203" y="424.5" width="28" height="10.5" fill="#cfcfcf"/><rect x="1246.5" y="424.5" width="161.5" height="10.5" fill="#cfcfcf"/><rect x="1429" y="424.5" width="4" height="10.5" fill="#cfcfcf"/><rect x="1203" y="446.5" width="28" height="10.5" fill="#cfcfcf"/><rect x="1246.5" y="446.5" width="161.5" height="10.5" fill="#cfcfcf"/><rect x="1429" y="446.5" width="4" height="10.5" fill="#cfcfcf"/><rect x="1203" y="468.5" width="28" height="10.5" fill="#cfcfcf"/><rect x="1246.5" y="468.5" width="161.5" height="10.5" fill="#cfcfcf"/><rect x="1429" y="468.5" width="4" height="10.5" fill="#cfcfcf"/><rect x="1203" y="490.5" width="28" height="10.5" fill="#cfcfcf"/><rect x="1246.5" y="490.5" width="161.5" height="10.5" fill="#cfcfcf"/><rect x="1429" y="490.5" width="4" height="10.5" fill="#cfcfcf"/><rect x="1203" y="512.5" width="28" height="10.5" fill="#cfcfcf"/><rect x="1246.5" y="512.5" width="161.5" height="10.5" fill="#cfcfcf"/><rect x="1429" y="512.5" width="4" height="10.5" fill="#cfcfcf"/><rect x="1241" y="259" width="1.5" height="257" fill="#808080"/><rect x="1327" y="259" width="1" height="257" fill="#808080"/><rect x="1418.5" y="259" width="1.5" height="257" fill="#808080"/><g font-family='"Liberation Sans", sans-serif' font-size="10"><text x="1203.5" y="268.4" fill="#00007a" textLength="27" lengthAdjust="spacingAndGlyphs">0000</text><text x="1247.3" y="268.4" fill="#000" textLength="12.5" lengthAdjust="spacingAndGlyphs">FD</text><text x="1268.4" y="268.4" fill="#000" textLength="12.5" lengthAdjust="spacingAndGlyphs">FD</text><text x="1289.5" y="268.4" fill="#000" textLength="12.5" lengthAdjust="spacingAndGlyphs">FD</text><text x="1310.6" y="268.4" fill="#000" textLength="12.5" lengthAdjust="spacingAndGlyphs">FD</text><text x="1331.7" y="268.4" fill="#000" textLength="12.5" lengthAdjust="spacingAndGlyphs">FD</text><text x="1352.8" y="268.4" fill="#000" textLength="12.5" lengthAdjust="spacingAndGlyphs">FD</text><text x="1373.9" y="268.4" fill="#000" textLength="12.5" lengthAdjust="spacingAndGlyphs">FD</text><text x="1395.0" y="268.4" fill="#000" textLength="12.5" lengthAdjust="spacingAndGlyphs">FD</text><rect x="1431" y="265.9" width="2" height="1.5" fill="#900000"/><text x="1203.5" y="279.4" fill="#00007a" textLength="27" lengthAdjust="spacingAndGlyphs">0008</text><text x="1247.3" y="279.4" fill="#000" textLength="12.5" lengthAdjust="spacingAndGlyphs">FD</text><text x="1268.4" y="279.4" fill="#000" textLength="12.5" lengthAdjust="spacingAndGlyphs">FD</text><text x="1289.5" y="279.4" fill="#000" textLength="12.5" lengthAdjust="spacingAndGlyphs">FD</text><text x="1310.6" y="279.4" fill="#000" textLength="12.5" lengthAdjust="spacingAndGlyphs">FD</text><text x="1331.7" y="279.4" fill="#000" textLength="12.5" lengthAdjust="spacingAndGlyphs">FD</text><text x="1352.8" y="279.4" fill="#000" textLength="12.5" lengthAdjust="spacingAndGlyphs">FD</text><text x="1373.9" y="279.4" fill="#000" textLength="12.5" lengthAdjust="spacingAndGlyphs">FD</text><text x="1395.0" y="279.4" fill="#000" textLength="12.5" lengthAdjust="spacingAndGlyphs">FD</text><rect x="1431" y="276.9" width="2" height="1.5" fill="#900000"/><text x="1203.5" y="290.4" fill="#00007a" textLength="27" lengthAdjust="spacingAndGlyphs">0010</text><text x="1247.3" y="290.4" fill="#000" textLength="12.5" lengthAdjust="spacingAndGlyphs">FF</text><text x="1268.4" y="290.4" fill="#000" textLength="12.5" lengthAdjust="spacingAndGlyphs">FF</text><text x="1289.5" y="290.4" fill="#000" textLength="12.5" lengthAdjust="spacingAndGlyphs">FF</text><text x="1310.6" y="290.4" fill="#000" textLength="12.5" lengthAdjust="spacingAndGlyphs">FF</text><text x="1331.7" y="290.4" fill="#000" textLength="12.5" lengthAdjust="spacingAndGlyphs">FF</text><text x="1352.8" y="290.4" fill="#000" textLength="12.5" lengthAdjust="spacingAndGlyphs">FF</text><text x="1373.9" y="290.4" fill="#000" textLength="12.5" lengthAdjust="spacingAndGlyphs">FF</text><text x="1395.0" y="290.4" fill="#000" textLength="12.5" lengthAdjust="spacingAndGlyphs">FF</text><rect x="1431" y="287.9" width="2" height="1.5" fill="#900000"/><text x="1203.5" y="301.4" fill="#00007a" textLength="27" lengthAdjust="spacingAndGlyphs">0018</text><text x="1247.3" y="301.4" fill="#000" textLength="12.5" lengthAdjust="spacingAndGlyphs">FF</text><text x="1268.4" y="301.4" fill="#000" textLength="12.5" lengthAdjust="spacingAndGlyphs">FF</text><text x="1289.5" y="301.4" fill="#000" textLength="12.5" lengthAdjust="spacingAndGlyphs">FF</text><text x="1310.6" y="301.4" fill="#000" textLength="12.5" lengthAdjust="spacingAndGlyphs">FF</text><text x="1331.7" y="301.4" fill="#000" textLength="12.5" lengthAdjust="spacingAndGlyphs">FF</text><text x="1352.8" y="301.4" fill="#000" textLength="12.5" lengthAdjust="spacingAndGlyphs">FF</text><text x="1373.9" y="301.4" fill="#000" textLength="12.5" lengthAdjust="spacingAndGlyphs">FF</text><text x="1395.0" y="301.4" fill="#000" textLength="12.5" lengthAdjust="spacingAndGlyphs">FF</text><rect x="1431" y="298.9" width="2" height="1.5" fill="#900000"/><text x="1203.5" y="312.4" fill="#00007a" textLength="27" lengthAdjust="spacingAndGlyphs">0020</text><text x="1247.3" y="312.4" fill="#000" textLength="12.5" lengthAdjust="spacingAndGlyphs">FF</text><text x="1268.4" y="312.4" fill="#000" textLength="12.5" lengthAdjust="spacingAndGlyphs">FF</text><text x="1289.5" y="312.4" fill="#000" textLength="12.5" lengthAdjust="spacingAndGlyphs">FF</text><text x="1310.6" y="312.4" fill="#000" textLength="12.5" lengthAdjust="spacingAndGlyphs">FF</text><text x="1331.7" y="312.4" fill="#000" textLength="12.5" lengthAdjust="spacingAndGlyphs">FF</text><text x="1352.8" y="312.4" fill="#000" textLength="12.5" lengthAdjust="spacingAndGlyphs">FF</text><text x="1373.9" y="312.4" fill="#000" textLength="12.5" lengthAdjust="spacingAndGlyphs">FF</text><text x="1395.0" y="312.4" fill="#000" textLength="12.5" lengthAdjust="spacingAndGlyphs">FF</text><rect x="1431" y="309.9" width="2" height="1.5" fill="#900000"/><text x="1203.5" y="323.4" fill="#00007a" textLength="27" lengthAdjust="spacingAndGlyphs">0028</text><text x="1247.3" y="323.4" fill="#000" textLength="12.5" lengthAdjust="spacingAndGlyphs">FF</text><text x="1268.4" y="323.4" fill="#000" textLength="12.5" lengthAdjust="spacingAndGlyphs">FF</text><text x="1289.5" y="323.4" fill="#000" textLength="12.5" lengthAdjust="spacingAndGlyphs">FF</text><text x="1310.6" y="323.4" fill="#000" textLength="12.5" lengthAdjust="spacingAndGlyphs">FF</text><text x="1331.7" y="323.4" fill="#000" textLength="12.5" lengthAdjust="spacingAndGlyphs">FF</text><text x="1352.8" y="323.4" fill="#000" textLength="12.5" lengthAdjust="spacingAndGlyphs">FF</text><text x="1373.9" y="323.4" fill="#000" textLength="12.5" lengthAdjust="spacingAndGlyphs">FF</text><text x="1395.0" y="323.4" fill="#000" textLength="12.5" lengthAdjust="spacingAndGlyphs">FF</text><rect x="1431" y="320.9" width="2" height="1.5" fill="#900000"/><text x="1203.5" y="334.4" fill="#00007a" textLength="27" lengthAdjust="spacingAndGlyphs">0030</text><text x="1247.3" y="334.4" fill="#000" textLength="12.5" lengthAdjust="spacingAndGlyphs">40</text><text x="1268.4" y="334.4" fill="#000" textLength="12.5" lengthAdjust="spacingAndGlyphs">40</text><text x="1289.5" y="334.4" fill="#000" textLength="12.5" lengthAdjust="spacingAndGlyphs">40</text><text x="1310.6" y="334.4" fill="#000" textLength="12.5" lengthAdjust="spacingAndGlyphs">40</text><text x="1331.7" y="334.4" fill="#000" textLength="12.5" lengthAdjust="spacingAndGlyphs">40</text><text x="1352.8" y="334.4" fill="#000" textLength="12.5" lengthAdjust="spacingAndGlyphs">40</text><text x="1373.9" y="334.4" fill="#000" textLength="12.5" lengthAdjust="spacingAndGlyphs">30</text><text x="1395.0" y="334.4" fill="#000" textLength="12.5" lengthAdjust="spacingAndGlyphs">30</text><rect x="1431" y="331.9" width="2" height="1.5" fill="#900000"/><text x="1203.5" y="345.4" fill="#00007a" textLength="27" lengthAdjust="spacingAndGlyphs">0038</text><text x="1247.3" y="345.4" fill="#000" textLength="12.5" lengthAdjust="spacingAndGlyphs">FA</text><text x="1268.4" y="345.4" fill="#000" textLength="12.5" lengthAdjust="spacingAndGlyphs">FA</text><text x="1289.5" y="345.4" fill="#000" textLength="12.5" lengthAdjust="spacingAndGlyphs">FA</text><text x="1310.6" y="345.4" fill="#000" textLength="12.5" lengthAdjust="spacingAndGlyphs">FA</text><text x="1331.7" y="345.4" fill="#000" textLength="12.5" lengthAdjust="spacingAndGlyphs">FA</text><text x="1352.8" y="345.4" fill="#000" textLength="12.5" lengthAdjust="spacingAndGlyphs">FA</text><text x="1373.9" y="345.4" fill="#000" textLength="12.5" lengthAdjust="spacingAndGlyphs">FA</text><text x="1395.0" y="345.4" fill="#000" textLength="12.5" lengthAdjust="spacingAndGlyphs">FA</text><rect x="1431" y="342.9" width="2" height="1.5" fill="#900000"/><text x="1203.5" y="356.4" fill="#00007a" textLength="27" lengthAdjust="spacingAndGlyphs">0040</text><text x="1247.3" y="356.4" fill="#000" textLength="12.5" lengthAdjust="spacingAndGlyphs">60</text><text x="1268.4" y="356.4" fill="#000" textLength="12.5" lengthAdjust="spacingAndGlyphs">30</text><text x="1289.5" y="356.4" fill="#000" textLength="12.5" lengthAdjust="spacingAndGlyphs">30</text><text x="1310.6" y="356.4" fill="#000" textLength="12.5" lengthAdjust="spacingAndGlyphs">30</text><text x="1331.7" y="356.4" fill="#000" textLength="12.5" lengthAdjust="spacingAndGlyphs">30</text><text x="1352.8" y="356.4" fill="#000" textLength="12.5" lengthAdjust="spacingAndGlyphs">30</text><text x="1373.9" y="356.4" fill="#000" textLength="12.5" lengthAdjust="spacingAndGlyphs">70</text><text x="1395.0" y="356.4" fill="#000" textLength="12.5" lengthAdjust="spacingAndGlyphs">30</text><rect x="1431" y="353.9" width="2" height="1.5" fill="#900000"/><text x="1203.5" y="367.4" fill="#00007a" textLength="27" lengthAdjust="spacingAndGlyphs">0048</text><text x="1247.3" y="367.4" fill="#000" textLength="12.5" lengthAdjust="spacingAndGlyphs">FA</text><text x="1268.4" y="367.4" fill="#000" textLength="12.5" lengthAdjust="spacingAndGlyphs">FA</text><text x="1289.5" y="367.4" fill="#000" textLength="12.5" lengthAdjust="spacingAndGlyphs">FA</text><text x="1310.6" y="367.4" fill="#000" textLength="12.5" lengthAdjust="spacingAndGlyphs">FA</text><text x="1331.7" y="367.4" fill="#000" textLength="12.5" lengthAdjust="spacingAndGlyphs">FA</text><text x="1352.8" y="367.4" fill="#000" textLength="12.5" lengthAdjust="spacingAndGlyphs">FA</text><text x="1373.9" y="367.4" fill="#000" textLength="12.5" lengthAdjust="spacingAndGlyphs">FA</text><text x="1395.0" y="367.4" fill="#000" textLength="12.5" lengthAdjust="spacingAndGlyphs">FA</text><rect x="1431" y="364.9" width="2" height="1.5" fill="#900000"/><text x="1203.5" y="378.4" fill="#00007a" textLength="27" lengthAdjust="spacingAndGlyphs">0050</text><text x="1247.3" y="378.4" fill="#000" textLength="12.5" lengthAdjust="spacingAndGlyphs">60</text><text x="1268.4" y="378.4" fill="#000" textLength="12.5" lengthAdjust="spacingAndGlyphs">30</text><text x="1289.5" y="378.4" fill="#000" textLength="12.5" lengthAdjust="spacingAndGlyphs">30</text><text x="1310.6" y="378.4" fill="#000" textLength="12.5" lengthAdjust="spacingAndGlyphs">30</text><text x="1331.7" y="378.4" fill="#000" textLength="12.5" lengthAdjust="spacingAndGlyphs">30</text><text x="1352.8" y="378.4" fill="#000" textLength="12.5" lengthAdjust="spacingAndGlyphs">30</text><text x="1373.9" y="378.4" fill="#000" textLength="12.5" lengthAdjust="spacingAndGlyphs">70</text><text x="1395.0" y="378.4" fill="#000" textLength="12.5" lengthAdjust="spacingAndGlyphs">30</text><rect x="1431" y="375.9" width="2" height="1.5" fill="#900000"/><text x="1203.5" y="389.4" fill="#00007a" textLength="27" lengthAdjust="spacingAndGlyphs">0058</text><text x="1247.3" y="389.4" fill="#000" textLength="12.5" lengthAdjust="spacingAndGlyphs">FB</text><text x="1268.4" y="389.4" fill="#000" textLength="12.5" lengthAdjust="spacingAndGlyphs">FB</text><text x="1289.5" y="389.4" fill="#000" textLength="12.5" lengthAdjust="spacingAndGlyphs">FB</text><text x="1310.6" y="389.4" fill="#000" textLength="12.5" lengthAdjust="spacingAndGlyphs">FB</text><text x="1331.7" y="389.4" fill="#000" textLength="12.5" lengthAdjust="spacingAndGlyphs">FB</text><text x="1352.8" y="389.4" fill="#000" textLength="12.5" lengthAdjust="spacingAndGlyphs">FB</text><text x="1373.9" y="389.4" fill="#000" textLength="12.5" lengthAdjust="spacingAndGlyphs">FB</text><text x="1395.0" y="389.4" fill="#000" textLength="12.5" lengthAdjust="spacingAndGlyphs">FB</text><rect x="1431" y="386.9" width="2" height="1.5" fill="#900000"/><text x="1203.5" y="400.4" fill="#00007a" textLength="27" lengthAdjust="spacingAndGlyphs">0060</text><text x="1247.3" y="400.4" fill="#000" textLength="12.5" lengthAdjust="spacingAndGlyphs">FF</text><text x="1268.4" y="400.4" fill="#000" textLength="12.5" lengthAdjust="spacingAndGlyphs">FF</text><text x="1289.5" y="400.4" fill="#000" textLength="12.5" lengthAdjust="spacingAndGlyphs">FF</text><text x="1310.6" y="400.4" fill="#000" textLength="12.5" lengthAdjust="spacingAndGlyphs">FF</text><text x="1331.7" y="400.4" fill="#000" textLength="12.5" lengthAdjust="spacingAndGlyphs">FF</text><text x="1352.8" y="400.4" fill="#000" textLength="12.5" lengthAdjust="spacingAndGlyphs">FF</text><text x="1373.9" y="400.4" fill="#000" textLength="12.5" lengthAdjust="spacingAndGlyphs">FF</text><text x="1395.0" y="400.4" fill="#000" textLength="12.5" lengthAdjust="spacingAndGlyphs">FF</text><rect x="1431" y="397.9" width="2" height="1.5" fill="#900000"/><text x="1203.5" y="411.4" fill="#00007a" textLength="27" lengthAdjust="spacingAndGlyphs">0068</text><text x="1247.3" y="411.4" fill="#000" textLength="12.5" lengthAdjust="spacingAndGlyphs">FF</text><text x="1268.4" y="411.4" fill="#000" textLength="12.5" lengthAdjust="spacingAndGlyphs">FF</text><text x="1289.5" y="411.4" fill="#000" textLength="12.5" lengthAdjust="spacingAndGlyphs">FF</text><text x="1310.6" y="411.4" fill="#000" textLength="12.5" lengthAdjust="spacingAndGlyphs">FF</text><text x="1331.7" y="411.4" fill="#000" textLength="12.5" lengthAdjust="spacingAndGlyphs">FF</text><text x="1352.8" y="411.4" fill="#000" textLength="12.5" lengthAdjust="spacingAndGlyphs">FF</text><text x="1373.9" y="411.4" fill="#000" textLength="12.5" lengthAdjust="spacingAndGlyphs">FF</text><text x="1395.0" y="411.4" fill="#000" textLength="12.5" lengthAdjust="spacingAndGlyphs">FF</text><rect x="1431" y="408.9" width="2" height="1.5" fill="#900000"/><text x="1203.5" y="422.4" fill="#00007a" textLength="27" lengthAdjust="spacingAndGlyphs">0070</text><text x="1247.3" y="422.4" fill="#000" textLength="12.5" lengthAdjust="spacingAndGlyphs">FF</text><text x="1268.4" y="422.4" fill="#000" textLength="12.5" lengthAdjust="spacingAndGlyphs">FF</text><text x="1289.5" y="422.4" fill="#000" textLength="12.5" lengthAdjust="spacingAndGlyphs">FF</text><text x="1310.6" y="422.4" fill="#000" textLength="12.5" lengthAdjust="spacingAndGlyphs">FF</text><text x="1331.7" y="422.4" fill="#000" textLength="12.5" lengthAdjust="spacingAndGlyphs">FF</text><text x="1352.8" y="422.4" fill="#000" textLength="12.5" lengthAdjust="spacingAndGlyphs">FF</text><text x="1373.9" y="422.4" fill="#000" textLength="12.5" lengthAdjust="spacingAndGlyphs">FF</text><text x="1395.0" y="422.4" fill="#000" textLength="12.5" lengthAdjust="spacingAndGlyphs">FF</text><rect x="1431" y="419.9" width="2" height="1.5" fill="#900000"/><text x="1203.5" y="433.4" fill="#00007a" textLength="27" lengthAdjust="spacingAndGlyphs">0078</text><text x="1247.3" y="433.4" fill="#000" textLength="12.5" lengthAdjust="spacingAndGlyphs">FF</text><text x="1268.4" y="433.4" fill="#000" textLength="12.5" lengthAdjust="spacingAndGlyphs">FF</text><text x="1289.5" y="433.4" fill="#000" textLength="12.5" lengthAdjust="spacingAndGlyphs">FF</text><text x="1310.6" y="433.4" fill="#000" textLength="12.5" lengthAdjust="spacingAndGlyphs">FF</text><text x="1331.7" y="433.4" fill="#000" textLength="12.5" lengthAdjust="spacingAndGlyphs">FF</text><text x="1352.8" y="433.4" fill="#000" textLength="12.5" lengthAdjust="spacingAndGlyphs">FF</text><text x="1373.9" y="433.4" fill="#000" textLength="12.5" lengthAdjust="spacingAndGlyphs">FF</text><text x="1395.0" y="433.4" fill="#000" textLength="12.5" lengthAdjust="spacingAndGlyphs">FF</text><rect x="1431" y="430.9" width="2" height="1.5" fill="#900000"/><text x="1203.5" y="444.4" fill="#00007a" textLength="27" lengthAdjust="spacingAndGlyphs">0080</text><text x="1247.3" y="444.4" fill="#000" textLength="12.5" lengthAdjust="spacingAndGlyphs">FF</text><text x="1268.4" y="444.4" fill="#000" textLength="12.5" lengthAdjust="spacingAndGlyphs">FF</text><text x="1289.5" y="444.4" fill="#000" textLength="12.5" lengthAdjust="spacingAndGlyphs">FF</text><text x="1310.6" y="444.4" fill="#000" textLength="12.5" lengthAdjust="spacingAndGlyphs">FF</text><text x="1331.7" y="444.4" fill="#000" textLength="12.5" lengthAdjust="spacingAndGlyphs">FF</text><text x="1352.8" y="444.4" fill="#000" textLength="12.5" lengthAdjust="spacingAndGlyphs">FF</text><text x="1373.9" y="444.4" fill="#000" textLength="12.5" lengthAdjust="spacingAndGlyphs">FF</text><text x="1395.0" y="444.4" fill="#000" textLength="12.5" lengthAdjust="spacingAndGlyphs">FF</text><rect x="1431" y="441.9" width="2" height="1.5" fill="#900000"/><text x="1203.5" y="455.4" fill="#00007a" textLength="27" lengthAdjust="spacingAndGlyphs">0088</text><text x="1247.3" y="455.4" fill="#000" textLength="12.5" lengthAdjust="spacingAndGlyphs">FF</text><text x="1268.4" y="455.4" fill="#000" textLength="12.5" lengthAdjust="spacingAndGlyphs">FF</text><text x="1289.5" y="455.4" fill="#000" textLength="12.5" lengthAdjust="spacingAndGlyphs">FF</text><text x="1310.6" y="455.4" fill="#000" textLength="12.5" lengthAdjust="spacingAndGlyphs">FF</text><text x="1331.7" y="455.4" fill="#000" textLength="12.5" lengthAdjust="spacingAndGlyphs">FF</text><text x="1352.8" y="455.4" fill="#000" textLength="12.5" lengthAdjust="spacingAndGlyphs">FF</text><text x="1373.9" y="455.4" fill="#000" textLength="12.5" lengthAdjust="spacingAndGlyphs">FF</text><text x="1395.0" y="455.4" fill="#000" textLength="12.5" lengthAdjust="spacingAndGlyphs">FF</text><rect x="1431" y="452.9" width="2" height="1.5" fill="#900000"/><text x="1203.5" y="466.4" fill="#00007a" textLength="27" lengthAdjust="spacingAndGlyphs">0090</text><text x="1247.3" y="466.4" fill="#000" textLength="12.5" lengthAdjust="spacingAndGlyphs">FF</text><text x="1268.4" y="466.4" fill="#000" textLength="12.5" lengthAdjust="spacingAndGlyphs">FF</text><text x="1289.5" y="466.4" fill="#000" textLength="12.5" lengthAdjust="spacingAndGlyphs">FF</text><text x="1310.6" y="466.4" fill="#000" textLength="12.5" lengthAdjust="spacingAndGlyphs">FF</text><text x="1331.7" y="466.4" fill="#000" textLength="12.5" lengthAdjust="spacingAndGlyphs">FF</text><text x="1352.8" y="466.4" fill="#000" textLength="12.5" lengthAdjust="spacingAndGlyphs">FF</text><text x="1373.9" y="466.4" fill="#000" textLength="12.5" lengthAdjust="spacingAndGlyphs">FF</text><text x="1395.0" y="466.4" fill="#000" textLength="12.5" lengthAdjust="spacingAndGlyphs">FF</text><rect x="1431" y="463.9" width="2" height="1.5" fill="#900000"/><text x="1203.5" y="477.4" fill="#00007a" textLength="27" lengthAdjust="spacingAndGlyphs">0098</text><text x="1247.3" y="477.4" fill="#000" textLength="12.5" lengthAdjust="spacingAndGlyphs">FF</text><text x="1268.4" y="477.4" fill="#000" textLength="12.5" lengthAdjust="spacingAndGlyphs">FF</text><text x="1289.5" y="477.4" fill="#000" textLength="12.5" lengthAdjust="spacingAndGlyphs">FF</text><text x="1310.6" y="477.4" fill="#000" textLength="12.5" lengthAdjust="spacingAndGlyphs">FF</text><text x="1331.7" y="477.4" fill="#000" textLength="12.5" lengthAdjust="spacingAndGlyphs">FF</text><text x="1352.8" y="477.4" fill="#000" textLength="12.5" lengthAdjust="spacingAndGlyphs">FF</text><text x="1373.9" y="477.4" fill="#000" textLength="12.5" lengthAdjust="spacingAndGlyphs">FF</text><text x="1395.0" y="477.4" fill="#000" textLength="12.5" lengthAdjust="spacingAndGlyphs">FF</text><rect x="1431" y="474.9" width="2" height="1.5" fill="#900000"/><text x="1203.5" y="488.4" fill="#00007a" textLength="27" lengthAdjust="spacingAndGlyphs">00A0</text><text x="1247.3" y="488.4" fill="#000" textLength="12.5" lengthAdjust="spacingAndGlyphs">FF</text><text x="1268.4" y="488.4" fill="#000" textLength="12.5" lengthAdjust="spacingAndGlyphs">FF</text><text x="1289.5" y="488.4" fill="#000" textLength="12.5" lengthAdjust="spacingAndGlyphs">FF</text><text x="1310.6" y="488.4" fill="#000" textLength="12.5" lengthAdjust="spacingAndGlyphs">FF</text><text x="1331.7" y="488.4" fill="#000" textLength="12.5" lengthAdjust="spacingAndGlyphs">FF</text><text x="1352.8" y="488.4" fill="#000" textLength="12.5" lengthAdjust="spacingAndGlyphs">FF</text><text x="1373.9" y="488.4" fill="#000" textLength="12.5" lengthAdjust="spacingAndGlyphs">FF</text><text x="1395.0" y="488.4" fill="#000" textLength="12.5" lengthAdjust="spacingAndGlyphs">FF</text><rect x="1431" y="485.9" width="2" height="1.5" fill="#900000"/><text x="1203.5" y="499.4" fill="#00007a" textLength="27" lengthAdjust="spacingAndGlyphs">00A8</text><text x="1247.3" y="499.4" fill="#000" textLength="12.5" lengthAdjust="spacingAndGlyphs">FF</text><text x="1268.4" y="499.4" fill="#000" textLength="12.5" lengthAdjust="spacingAndGlyphs">FF</text><text x="1289.5" y="499.4" fill="#000" textLength="12.5" lengthAdjust="spacingAndGlyphs">FF</text><text x="1310.6" y="499.4" fill="#000" textLength="12.5" lengthAdjust="spacingAndGlyphs">FF</text><text x="1331.7" y="499.4" fill="#000" textLength="12.5" lengthAdjust="spacingAndGlyphs">FF</text><text x="1352.8" y="499.4" fill="#000" textLength="12.5" lengthAdjust="spacingAndGlyphs">FF</text><text x="1373.9" y="499.4" fill="#000" textLength="12.5" lengthAdjust="spacingAndGlyphs">FF</text><text x="1395.0" y="499.4" fill="#000" textLength="12.5" lengthAdjust="spacingAndGlyphs">FF</text><rect x="1431" y="496.9" width="2" height="1.5" fill="#900000"/><text x="1203.5" y="510.4" fill="#00007a" textLength="27" lengthAdjust="spacingAndGlyphs">00B0</text><text x="1247.3" y="510.4" fill="#000" textLength="12.5" lengthAdjust="spacingAndGlyphs">FF</text><text x="1268.4" y="510.4" fill="#000" textLength="12.5" lengthAdjust="spacingAndGlyphs">FF</text><text x="1289.5" y="510.4" fill="#000" textLength="12.5" lengthAdjust="spacingAndGlyphs">FF</text><text x="1310.6" y="510.4" fill="#000" textLength="12.5" lengthAdjust="spacingAndGlyphs">FF</text><text x="1331.7" y="510.4" fill="#000" textLength="12.5" lengthAdjust="spacingAndGlyphs">FF</text><text x="1352.8" y="510.4" fill="#000" textLength="12.5" lengthAdjust="spacingAndGlyphs">FF</text><text x="1373.9" y="510.4" fill="#000" textLength="12.5" lengthAdjust="spacingAndGlyphs">FF</text><text x="1395.0" y="510.4" fill="#000" textLength="12.5" lengthAdjust="spacingAndGlyphs">FF</text><rect x="1431" y="507.9" width="2" height="1.5" fill="#900000"/><text x="1203.5" y="521.4" fill="#00007a" textLength="27" lengthAdjust="spacingAndGlyphs">00B8</text><text x="1247.3" y="521.4" fill="#000" textLength="12.5" lengthAdjust="spacingAndGlyphs">FF</text><text x="1268.4" y="521.4" fill="#000" textLength="12.5" lengthAdjust="spacingAndGlyphs">FF</text><text x="1289.5" y="521.4" fill="#000" textLength="12.5" lengthAdjust="spacingAndGlyphs">FF</text><text x="1310.6" y="521.4" fill="#000" textLength="12.5" lengthAdjust="spacingAndGlyphs">FF</text><text x="1331.7" y="521.4" fill="#000" textLength="12.5" lengthAdjust="spacingAndGlyphs">FF</text><text x="1352.8" y="521.4" fill="#000" textLength="12.5" lengthAdjust="spacingAndGlyphs">FF</text><text x="1373.9" y="521.4" fill="#000" textLength="12.5" lengthAdjust="spacingAndGlyphs">FF</text><text x="1395.0" y="521.4" fill="#000" textLength="12.5" lengthAdjust="spacingAndGlyphs">FF</text></g><rect x="1245.5" y="281.5" width="166" height="22" fill="none" stroke="#e00000" stroke-width="1"/></g></svg>
<svg width="1433" height="516" style="position:absolute;left:0;top:0">
<g stroke="#e80000" stroke-width="1.3" fill="none" stroke-linecap="round">
<path d="M753.3,286.6 L847.4,111.3 M847.4,111.3 L844.9,114 L828,126.5 M847.4,111.3 V146"/>
<path d="M750.6,285.5 L762.6,242 M754.8,285.5 L789.7,255.3"/>
</g>
<g stroke="#fff" stroke-width="1" fill="none"><circle cx="820.5" cy="168.5" r="3"/><path d="M817,168.5 H832 M829,166 L832,168.5 L829,171"/></g>
</svg>
</body></html>
